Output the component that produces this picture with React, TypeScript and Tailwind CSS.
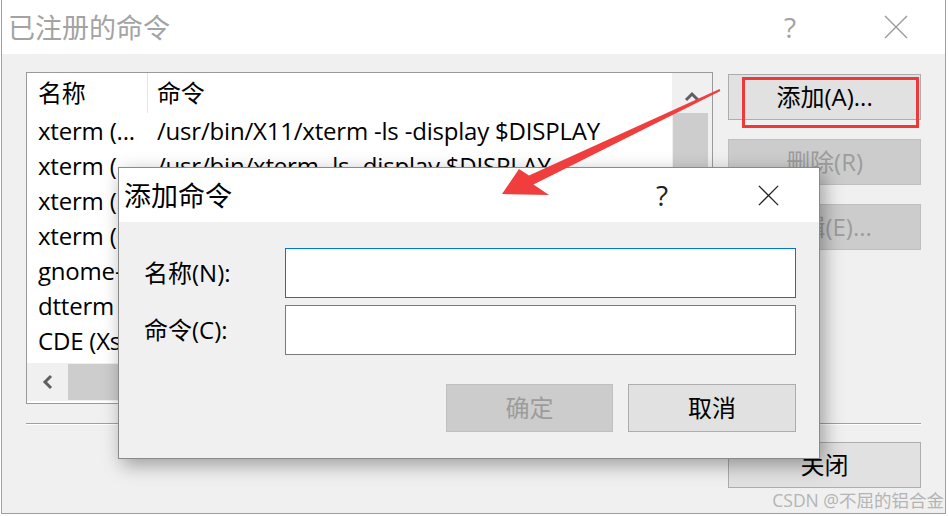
import React from "react";

const FONT = "font-['Open_Sans','Noto_Sans_CJK_SC',sans-serif]";

function XIcon({ size, color, stroke }: { size: number; color: string; stroke: number }) {
  return (
    <svg width={size} height={size} viewBox="0 0 24 24">
      <path d="M1 1 L23 23 M23 1 L1 23" stroke={color} strokeWidth={stroke} fill="none" />
    </svg>
  );
}

function Chevron({ dir }: { dir: "up" | "left" }) {
  return (
    <svg width="16" height="16" viewBox="0 0 16 16">
      {dir === "up" ? (
        <path d="M2 11 L8 5 L14 11" stroke="#606060" strokeWidth="3" fill="none" />
      ) : (
        <path d="M11 2 L5 8 L11 14" stroke="#606060" strokeWidth="3" fill="none" />
      )}
    </svg>
  );
}

const rows: [string, string][] = [
  ["xterm (...", "/usr/bin/X11/xterm -ls -display $DISPLAY"],
  ["xterm (...", "/usr/bin/xterm -ls -display $DISPLAY"],
  ["xterm (...", "/usr/openwin/bin/xterm -ls -display $DISPLAY"],
  ["xterm (...", "/usr/X11R6/bin/xterm -ls -display $DISPLAY"],
  ["gnome-te...", "/usr/bin/gnome-terminal --display=$DISPLAY"],
  ["dtterm", "/usr/dt/bin/dtterm -display $DISPLAY"],
  ["CDE (Xs...", "/usr/dt/bin/Xsession"],
];

export default function App() {
  return (
    <div className={`relative w-[949px] h-[516px] bg-white overflow-hidden ${FONT}`}>
      {/* Main window */}
      <div className="ml-[1px] w-[945px] h-[514px] border border-t-0 border-[#a0a0a0] flex flex-col">
        {/* title bar */}
        <div className="h-[54px] bg-white flex items-center pl-[6px] pr-[3px]">
          <span className="text-[27px] leading-none text-[#a3a3a3]">已注册的命令</span>
          <div className="ml-auto flex gap-[14px] items-center">
            <div className="w-[92px] flex justify-center text-[28px] leading-none text-[#a3a3a3]">?</div>
            <div className="w-[92px] flex justify-center">
              <XIcon size={24} color="#9a9a9a" stroke={1.4} />
            </div>
          </div>
        </div>
        {/* body */}
        <div className="flex-1 bg-[#f0f0f0] px-[24px] pt-[18px] flex flex-col">
          <div className="flex gap-[15px]">
            {/* list */}
            <div className="w-[688px] h-[332px] border border-[#9a9a9a] bg-white flex">
              <div className="flex-1 flex flex-col min-w-0">
                <div className="h-[290px] overflow-hidden text-[24px] tracking-[-0.2px] text-black">
                  <div className="h-[40px] flex items-center">
                    <div className="w-[120px] pl-[11px] h-full flex items-center">名称</div>
                    <div className="w-px h-full bg-[#e5e5e5]" />
                    <div className="pl-[9px]">命令</div>
                  </div>
                  {rows.map(([n, c], i) => (
                    <div key={i} className="h-[35px] flex items-center whitespace-nowrap">
                      <div className="w-[121px] pl-[11px] overflow-hidden">{n}</div>
                      <div className="pl-[9px]">{c}</div>
                    </div>
                  ))}
                </div>
                <div className="h-[38px] bg-[#f0f0f0] flex">
                  <div className="w-[41px] flex items-center justify-center">
                    <Chevron dir="left" />
                  </div>
                  <div className="w-[300px] my-px bg-[#cdcdcd]" />
                </div>
              </div>
              <div className="w-[40px] bg-[#f0f0f0] flex flex-col">
                <div className="h-[40px] flex items-center justify-center pt-[8px]">
                  <Chevron dir="up" />
                </div>
                <div className="h-[140px] ml-px mr-[4px] bg-[#cdcdcd]" />
              </div>
            </div>
            {/* buttons */}
            <div className="w-[193px] pt-[2px] flex flex-col gap-[19px] text-[24px]">
              <div className="h-[46px] border border-[#adadad] bg-[#e1e1e1] flex items-center justify-center text-black">
                添加(A)...
              </div>
              <div className="h-[46px] border border-[#bfbfbf] bg-[#cccccc] flex items-center justify-center text-[#9c9c9c]">
                删除(R)
              </div>
              <div className="h-[46px] border border-[#bfbfbf] bg-[#cccccc] flex items-center justify-center text-[#9c9c9c]">
                编辑(E)...
              </div>
            </div>
          </div>
          <div className="mt-[19px] h-px bg-[#a0a0a0] border-b border-white box-content" />
          <div className="mt-[17px] self-end w-[193px] h-[46px] border border-[#adadad] bg-[#e1e1e1] flex items-center justify-center text-[24px] text-black">
            关闭
          </div>
        </div>
      </div>

      {/* Add command dialog */}
      <div className="absolute left-[118px] top-[167px] w-[702px] h-[292px] border border-[#8a8a8a] bg-[#f0f0f0] flex flex-col shadow-[4px_6px_18px_rgba(0,0,0,0.35)]">
        <div className="h-[54px] bg-white flex items-center pl-[5px] pr-[5px]">
          <span className="text-[27px] leading-none text-black">添加命令</span>
          <div className="ml-auto flex gap-[14px] items-center">
            <div className="w-[92px] flex justify-center text-[28px] leading-none text-[#222]">?</div>
            <div className="w-[92px] flex justify-center">
              <XIcon size={21} color="#222" stroke={1.5} />
            </div>
          </div>
        </div>
        <div className="flex-1 pl-[25px] pt-[26px] flex flex-col text-[24px] text-black">
          <div className="flex items-center">
            <div className="w-[141px]">名称(N):</div>
            <div className="w-[511px] h-[50px] bg-white border border-[#0078d7]" />
          </div>
          <div className="mt-[7px] flex items-center">
            <div className="w-[141px]">命令(C):</div>
            <div className="w-[511px] h-[50px] bg-white border border-[#7a7a7a]" />
          </div>
          <div className="mt-[29px] w-[652px] flex justify-end gap-[15px]">
            <div className="w-[167px] h-[48px] border border-[#bfbfbf] bg-[#cccccc] flex items-center justify-center text-[#9c9c9c]">
              确定
            </div>
            <div className="w-[168px] h-[48px] border border-[#adadad] bg-[#e1e1e1] flex items-center justify-center text-black">
              取消
            </div>
          </div>
        </div>
      </div>

      {/* annotation: red rectangle */}
      <div className="absolute left-[742px] top-[77px] w-[177px] h-[51px] border-[3px] border-[#ec3a3a]" />

      {/* annotation: red arrow */}
      <svg className="absolute left-0 top-0 pointer-events-none" width="949" height="516">
        <polygon
          points="502,194 519,169 529,175.5 719.6,89 720.4,91 533.5,184.5 549,195"
          fill="#f03e3e"
        />
      </svg>

      {/* watermark */}
      <div className="absolute right-[5px] bottom-[7px] text-[17.5px] leading-none text-[#b4b4b4]">
        CSDN @不屈的铝合金
      </div>
    </div>
  );
}
